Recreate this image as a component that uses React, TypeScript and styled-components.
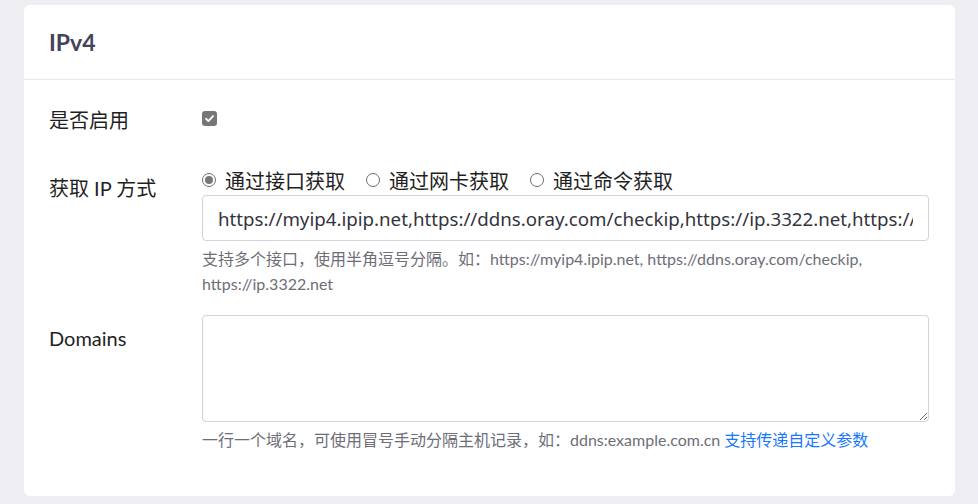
import React from "react";
import styled, { createGlobalStyle } from "styled-components";

const Global = createGlobalStyle`
  html, body { margin: 0; padding: 0; background: #eeeef3; }
  body { font-family: "Noto Sans", "Noto Sans CJK SC", sans-serif; }
`;

const Page = styled.div`
  padding: 5px 23px 9px 24px;
  min-height: 504px;
  box-sizing: border-box;
`;

const Card = styled.section`
  background: #fff;
  border-radius: 6px;
  width: 931px;
`;

const Header = styled.div`
  height: 75px;
  box-sizing: border-box;
  border-bottom: 1px solid #e8e8ee;
  padding: 0 25px;
  display: flex;
  align-items: center;
`;

const Title = styled.h2`
  margin: 0;
  font-family: Lato, "Noto Sans", sans-serif;
  font-weight: 700;
  font-size: 23px;
  color: #43435a;
`;

const Body = styled.div`
  padding: 17px 25px 44px;
  display: flex;
  flex-direction: column;
  gap: 19px;
`;

const Row = styled.div`
  display: grid;
  grid-template-columns: 153px 727px;
`;

const Label = styled.div`
  font-family: Lato, "Noto Sans CJK SC", sans-serif;
  font-size: 20px;
  line-height: 30px;
  padding: 8px 0 11px;
  color: #1f1f24;
`;

const Control = styled.div<{ $pt?: number }>`
  display: flex;
  flex-direction: column;
  padding-top: ${(p) => p.$pt ?? 0}px;
`;

const Check = styled.span`
  width: 15px;
  height: 15px;
  border-radius: 3px;
  background: #767676;
  display: flex;
  align-items: center;
  justify-content: center;
`;

const Radios = styled.div`
  display: flex;
  align-items: center;
  height: 30px;
  gap: 21px;
`;

const RadioItem = styled.label`
  display: flex;
  align-items: center;
  gap: 9px;
  font-size: 20px;
  color: #1f1f24;
`;

const RadioCircle = styled.span<{ $on?: boolean }>`
  width: 12px;
  height: 12px;
  border-radius: 50%;
  border: 1px solid #6d6d6d;
  display: flex;
  align-items: center;
  justify-content: center;
  &::after {
    content: "";
    width: 8px;
    height: 8px;
    border-radius: 50%;
    background: ${(p) => (p.$on ? "#777" : "transparent")};
  }
`;

const Input = styled.input`
  height: 46px;
  box-sizing: border-box;
  border: 1px solid #d3d4da;
  border-radius: 4px;
  padding: 0 15px;
  font-family: "Noto Sans", sans-serif;
  font-size: 18.7px;
  color: #33333d;
  outline: none;
  width: 100%;
`;

const TextArea = styled.textarea`
  height: 107px;
  box-sizing: border-box;
  border: 1px solid #d3d4da;
  border-radius: 4px;
  padding: 8px 15px;
  font-family: "Noto Sans", sans-serif;
  font-size: 18px;
  outline: none;
  width: 100%;
`;

const Help = styled.div`
  margin-top: 5px;
  font-family: Lato, "Noto Sans CJK SC", sans-serif;
  font-size: 16px;
  line-height: 25px;
  color: #6e6e78;
`;

const Link = styled.a`
  color: #1677ff;
  text-decoration: none;
`;

const CheckIcon = () => (
  <svg width="11" height="11" viewBox="0 0 12 12">
    <path d="M2.2 6.3 L4.8 8.8 L9.8 3.3" fill="none" stroke="#fff" strokeWidth="2" strokeLinecap="round" strokeLinejoin="round" />
  </svg>
);

export default function App() {
  return (
    <>
      <Global />
      <Page>
        <Card>
          <Header>
            <Title>IPv4</Title>
          </Header>
          <Body>
            <Row>
              <Label>是否启用</Label>
              <Control $pt={14}>
                <Check>
                  <CheckIcon />
                </Check>
              </Control>
            </Row>
            <Row>
              <Label>获取 IP 方式</Label>
              <Control>
                <Radios>
                  <RadioItem>
                    <RadioCircle $on />
                    通过接口获取
                  </RadioItem>
                  <RadioItem>
                    <RadioCircle />
                    通过网卡获取
                  </RadioItem>
                  <RadioItem>
                    <RadioCircle />
                    通过命令获取
                  </RadioItem>
                </Radios>
                <Input
                  readOnly
                  value="https://myip4.ipip.net,https://ddns.oray.com/checkip,https://ip.3322.net,https://4.ipw.cn,https://v4.yinghualuo.cn/bejson"
                />
                <Help>
                  支持多个接口，使用半角逗号分隔。如：https://myip4.ipip.net, https://ddns.oray.com/checkip,
                  https://ip.3322.net
                </Help>
              </Control>
            </Row>
            <Row>
              <Label>Domains</Label>
              <Control>
                <TextArea />
                <Help>
                  一行一个域名，可使用冒号手动分隔主机记录，如：ddns:example.com.cn{" "}
                  <Link href="#">支持传递自定义参数</Link>
                </Help>
              </Control>
            </Row>
          </Body>
        </Card>
      </Page>
    </>
  );
}
